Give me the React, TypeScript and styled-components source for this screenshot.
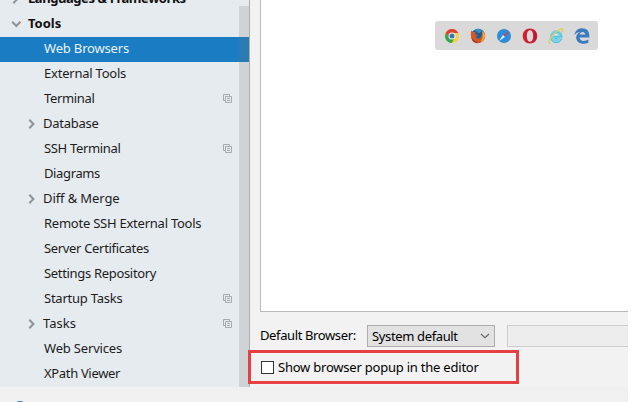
import React from "react";
import styled, { createGlobalStyle } from "styled-components";

const Global = createGlobalStyle`
  * { box-sizing: border-box; }
  body { margin: 0; background: #fff; overflow: hidden; }
`;

const Dialog = styled.div`
  width: 628px;
  height: 402px;
  display: flex;
  flex-direction: column;
  overflow: hidden;
  background: #f0f0f0;
  color: #1c1c1c;
  font: 13px/25px "Noto Sans", "Open Sans", sans-serif;
  white-space: nowrap;
`;

const Main = styled.div`
  height: 387px;
  display: flex;
`;

const Sidebar = styled.nav`
  position: relative;
  width: 250px;
  height: 387px;
  flex: none;
  display: flex;
  flex-direction: column;
  justify-content: flex-end;
  overflow: hidden;
  background: #e6ebef;
  border-right: 1px solid #acaeb0;
`;

const ScrollThumb = styled.div`
  position: absolute;
  top: 6px;
  right: 0;
  bottom: 0;
  width: 10px;
  background: rgba(115, 115, 115, 0.2);
`;

const Row = styled.div<{ $level: number; $selected?: boolean }>`
  height: 25px;
  flex: none;
  display: flex;
  align-items: center;
  padding-bottom: 2px;
  padding-left: ${(p) => (p.$level ? 26 : 10)}px;
  padding-right: 16px;
  font-weight: ${(p) => (p.$level ? 400 : 700)};
  color: ${(p) => (p.$selected ? "#e9f3fb" : p.$level ? "#1c1c1c" : "#111")};
  background: ${(p) => (p.$selected ? "#1a7dc4" : "transparent")};
`;

const ArrowSlot = styled.span<{ $wide: boolean }>`
  width: ${(p) => (p.$wide ? 18 : 17)}px;
  height: 23px;
  flex: none;
  display: flex;
  align-items: center;
`;

const Label = styled.span<{ $spacing: number }>`
  flex: 1;
  line-height: 23px;
  letter-spacing: ${(p) => p.$spacing}px;
`;

const Content = styled.main`
  flex: 1;
  min-width: 0;
  display: flex;
  flex-direction: column;
  padding-left: 10px;
  background: #f2f2f2;
`;

const BrowserList = styled.div`
  height: 312px;
  flex: none;
  display: flex;
  align-items: flex-start;
  padding: 21px 0 0 174px;
  background: #fff;
  border-left: 1px solid #b9b9b9;
  border-bottom: 1px solid #b9b9b9;
`;

const BrowserPopup = styled.div`
  width: 163px;
  height: 29px;
  display: flex;
  align-items: center;
  gap: 10px;
  padding-left: 9px;
  border-radius: 3px;
  background: #d9d9d9;
  svg { flex: none; }
`;

const DefaultRow = styled.div`
  height: 22px;
  margin-top: 13px;
  display: flex;
  line-height: 22px;
  color: #000;
`;

const FieldLabel = styled.label`
  width: 107px;
  flex: none;
  line-height: 20px;
  letter-spacing: -0.38px;
`;

const Select = styled.div`
  width: 128px;
  flex: none;
  display: flex;
  align-items: center;
  justify-content: space-between;
  padding: 0 4px 0 4px;
  border: 1px solid #adadad;
  background: #e2e2e2;
  letter-spacing: -0.36px;
`;

const PathField = styled.div`
  flex: 1;
  margin-left: 12px;
  border: 1px solid #cdcdcd;
  border-right: 0;
  background: #ededed;
`;

const Highlight = styled.div`
  position: relative;
  z-index: 1;
  width: 271px;
  height: 34px;
  margin: 3px 0 0 -12px;
  display: flex;
  align-items: center;
  gap: 4px;
  padding-left: 10px;
  border: 3px solid #e64042;
  color: #000;
  letter-spacing: -0.22px;
`;

const CheckBox = styled.span`
  width: 13px;
  height: 13px;
  flex: none;
  border: 1px solid #333;
  background: #fff;
`;

const Footer = styled.footer`
  height: 15px;
  padding: 13.5px 0 0 13px;
  overflow: hidden;
`;

const HelpCircle = styled.div`
  width: 14px;
  height: 14px;
  border-radius: 50%;
  background: #2f7fb8;
`;

const Chevron = ({ open }: { open?: boolean }) =>
  open ? (
    <svg width="12" height="12" fill="none" stroke="#8f9397" strokeWidth="2">
      <path d="M2.2 3.8 6.3 8l4.1-4.2" />
    </svg>
  ) : (
    <svg width="12" height="12" fill="none" stroke="#8f9397" strokeWidth="2">
      <path d="M3.3 1.8 7.4 6 3.3 10.2" />
    </svg>
  );

const CopyIcon = () => (
  <svg width="10" height="10" fill="none" stroke="#a5abb0">
    <path d="M2.5 6.5h-2v-6h6v2" />
    <path d="M2.5 2.5h6v6h-6zM4 4.5h3M4 6.5h3" />
  </svg>
);

const Chrome = () => (
  <svg width="16" height="16" viewBox="0 0 16 16">
    <circle cx="8" cy="8" r="7" fill="#f9cf3c" />
    <path d="M1.7 4.9A7 7 0 0 1 14.3 5H8L5 9.8Z" fill="#d94234" />
    <path d="M1.7 4.9A7 7 0 0 0 7.6 15l3-4.8L5 9.8Z" fill="#35a451" />
    <circle cx="8" cy="8" r="3.5" fill="#f2f5f4" />
    <circle cx="8" cy="8" r="2.5" fill="#2d7bbd" />
  </svg>
);

const Firefox = () => (
  <svg width="16" height="16" viewBox="0 0 16 16">
    <circle cx="8.2" cy="7.7" r="6.9" fill="#225f96" />
    <path d="M4.5 2.2Q9-.6 12.4 2.4L9 5.2Z" fill="#398fc2" />
    <path d="M1.3 2.4 3.4 4l2.4.1L5 6.2l2.8.8-2 1.9c1 2.3 4.7 2.1 5.7-.4 1-2 .7-3.8.3-5.3C15.4 5 16 8.5 14.4 11.3 11.2 16.8 3.5 16.4 1.4 10.8Q.3 6 1.3 2.4Z" fill="#d35a28" />
    <path d="M12.3 2.8Q16 6 14.6 9.9q-1.3 3.2-4.2 4.1 3.3-3.3 1.9-11.2Z" fill="#efad35" />
    <path d="M1.6 10q2.8 4 7.6 3.6-4 2.9-6.8-1.1Z" fill="#9f3029" />
  </svg>
);

const Safari = () => (
  <svg width="16" height="16" viewBox="0 0 16 16">
    <circle cx="8" cy="8" r="7" fill="#4783b5" />
    <circle cx="8" cy="8" r="6.2" fill="#2691e2" />
    <path d="m13 3-4 6-2-2Z" fill="#c94450" />
    <path d="m3 13 4-6 2 2Z" fill="#e0eaf2" />
  </svg>
);

const Opera = () => (
  <svg width="16" height="16" viewBox="0 0 16 16">
    <path fillRule="evenodd" d="M8 .5c-4.4 0-7.3 3.2-7.3 7.5s3 7.5 7.3 7.5 7.3-3.3 7.3-7.5S12.3.5 8 .5Zm0 1.8c2.2 0 3.1 2.5 3.1 5.7s-.9 5.7-3.1 5.7S4.9 11.2 4.9 8 5.8 2.3 8 2.3Z" fill="#d01f33" />
    <path d="M11.8 2.2Q14.4 4 14.4 8t-2.7 5.9Q13.4 8 11.8 2.2Z" fill="#b5192d" />
  </svg>
);

const Explorer = () => (
  <svg width="16" height="16" viewBox="0 0 16 16" fill="none">
    <circle cx="8.3" cy="8.5" r="6.4" fill="#7fd3e6" />
    <path d="M13.3 11.4A5.4 5.4 0 1 1 13.6 8.6H6.4Q7 11.5 10 10.8" stroke="#4fbfd8" strokeWidth="1" />
    <path d="M5.6 7.4Q8 4 10.8 7.4Z" fill="#d4edf0" />
    <path d="M2.6 14.6C-.2 15.5.8 11 5.5 6.2 10 1.6 14.6-.4 14.8 1.6c.1 1-.4 2.2-1 3.2" stroke="#e9cb58" strokeWidth="1.3" />
  </svg>
);

const Edge = () => (
  <svg width="16" height="16" viewBox="0 0 16 16">
    <path d="M.4 7.1C1.2 2.8 4 .3 8.2.3c4.5 0 7.2 3 7.2 7.5v1.7H5.6c.1 4 5.3 4.3 8.8 2.1v3.2C9.7 17 3 15.8 2.2 10.3c-.3-2.8 1.1-5 3.7-6.4C3.5 4.1 1.6 5.2.4 7.1Zm5.3-.5h5.4C11 3 6.3 3.3 5.7 6.6Z" fill="#3c7cbe" />
  </svg>
);

interface Item {
  text: string;
  level?: number;
  arrow?: "open" | "closed";
  selected?: boolean;
  copy?: boolean;
  spacing?: number;
}

const items: Item[] = [
  { text: "Languages & Frameworks", level: 0, arrow: "closed", spacing: -0.44 },
  { text: "Tools", level: 0, arrow: "open" },
  { text: "Web Browsers", selected: true, spacing: -0.17 },
  { text: "External Tools", spacing: -0.22 },
  { text: "Terminal", copy: true, spacing: -0.35 },
  { text: "Database", arrow: "closed", spacing: -0.25 },
  { text: "SSH Terminal", copy: true, spacing: -0.33 },
  { text: "Diagrams", spacing: -0.37 },
  { text: "Diff & Merge", arrow: "closed", spacing: -0.1 },
  { text: "Remote SSH External Tools", spacing: -0.24 },
  { text: "Server Certificates", spacing: -0.33 },
  { text: "Settings Repository", spacing: -0.32 },
  { text: "Startup Tasks", copy: true, spacing: -0.23 },
  { text: "Tasks", arrow: "closed", copy: true },
  { text: "Web Services", spacing: -0.17 },
  { text: "XPath Viewer", spacing: -0.33 },
];

export default function App() {
  return (
    <>
      <Global />
      <Dialog>
        <Main>
          <Sidebar>
            {items.map(({ text, level = 1, arrow, selected, copy, spacing = 0 }) => (
              <Row key={text} $level={level} $selected={selected}>
                <ArrowSlot $wide={level === 0 || !arrow}>
                  {arrow && <Chevron open={arrow === "open"} />}
                </ArrowSlot>
                <Label $spacing={spacing}>{text}</Label>
                {copy && <CopyIcon />}
              </Row>
            ))}
            <ScrollThumb />
          </Sidebar>
          <Content>
            <BrowserList>
              <BrowserPopup>
                <Chrome />
                <Firefox />
                <Safari />
                <Opera />
                <Explorer />
                <Edge />
              </BrowserPopup>
            </BrowserList>
            <DefaultRow>
              <FieldLabel>Default Browser:</FieldLabel>
              <Select>
                System default
                <svg width="10" height="6" fill="none" stroke="#666" strokeWidth="1.1">
                  <path d="m1 1 4 3.7L9 1" />
                </svg>
              </Select>
              <PathField />
            </DefaultRow>
            <Highlight>
              <CheckBox />
              Show browser popup in the editor
            </Highlight>
          </Content>
        </Main>
        <Footer>
          <HelpCircle />
        </Footer>
      </Dialog>
    </>
  );
}
